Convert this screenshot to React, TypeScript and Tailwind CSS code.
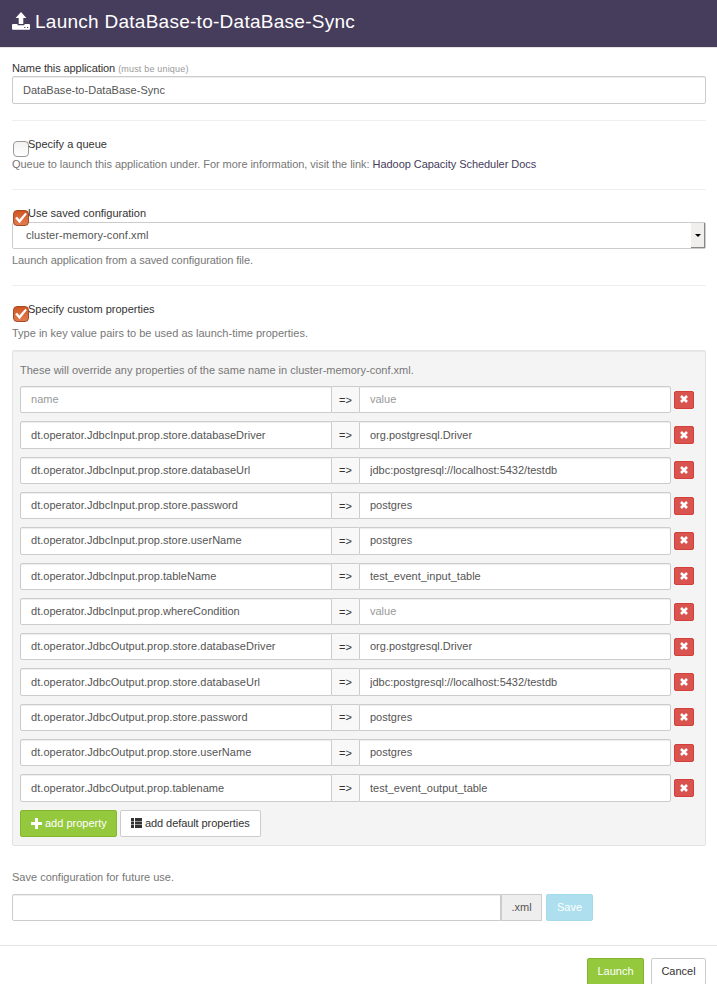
import React from "react";

const rows: [string, string][] = [
  ["", ""],
  ["dt.operator.JdbcInput.prop.store.databaseDriver", "org.postgresql.Driver"],
  ["dt.operator.JdbcInput.prop.store.databaseUrl", "jdbc:postgresql://localhost:5432/testdb"],
  ["dt.operator.JdbcInput.prop.store.password", "postgres"],
  ["dt.operator.JdbcInput.prop.store.userName", "postgres"],
  ["dt.operator.JdbcInput.prop.tableName", "test_event_input_table"],
  ["dt.operator.JdbcInput.prop.whereCondition", ""],
  ["dt.operator.JdbcOutput.prop.store.databaseDriver", "org.postgresql.Driver"],
  ["dt.operator.JdbcOutput.prop.store.databaseUrl", "jdbc:postgresql://localhost:5432/testdb"],
  ["dt.operator.JdbcOutput.prop.store.password", "postgres"],
  ["dt.operator.JdbcOutput.prop.store.userName", "postgres"],
  ["dt.operator.JdbcOutput.prop.tablename", "test_event_output_table"],
];

const inputStyle =
  "border border-[#cccccc] bg-white text-[#555555] placeholder:text-[#999999] shadow-[inset_0_1px_1px_rgba(0,0,0,0.075)] outline-none px-[10px] min-w-0";

function UploadIcon() {
  return (
    <svg width="18" height="18" viewBox="0 0 18 18" fill="#fff" className="shrink-0">
      <path d="M9 0 L14.4 6 H11.3 V12 H6.7 V6 H3.6 Z" />
      <path
        fillRule="evenodd"
        d="M1 12 H5.5 V13.2 H12.5 V12 H17 Q18 12 18 13 V16.7 Q18 17.7 17 17.7 H1 Q0 17.7 0 16.7 V13 Q0 12 1 12 Z M12.2 15 V16 H13.4 V15 Z M15 15 V16 H16.2 V15 Z"
      />
    </svg>
  );
}

function Check({ on, label }: { on?: boolean; label: string }) {
  return (
    <label className="flex h-[16px] items-start pl-px text-[#333333]">
      <span
        className={
          "relative z-10 mt-[5px] flex h-4 w-4 shrink-0 items-center justify-center rounded-[4px] border " +
          (on
            ? "border-[#a34a26] bg-linear-to-b from-[#d2541f] to-[#e07c50]"
            : "border-[#9c9a98] bg-linear-to-b from-[#f2f2f2] to-white")
        }
      >
        {on && (
          <svg width="14" height="14" viewBox="0 0 14 14" fill="#fff" className="shrink-0">
            <path d="M1.2 7.2 L3 5.8 L5.4 8.6 L11.3 1.8 L12.9 3 L5.6 12.2 Z" />
          </svg>
        )}
      </span>
      <span className="relative z-10 -ml-px leading-4">{label}</span>
    </label>
  );
}

export default function App() {
  return (
    <div className="h-[984px] w-[717px] overflow-hidden bg-white font-['Liberation_Sans',Arial,sans-serif] text-[11px] leading-4 text-[#777777]">
      <header className="flex h-[48px] items-start gap-[5px] border-b border-[#e5e5e5] bg-[#463c5c] pt-3 pl-3 text-white">
        <UploadIcon />
        <h1 className="text-[19px] leading-5 tracking-[0.265px]">Launch DataBase-to-DataBase-Sync</h1>
      </header>
      <main className="flex flex-col pr-[11px] pl-3">
        <label className="mt-[12px] h-4 text-[#333333]">
          <span className="tracking-[-0.1px]">Name this application</span>{" "}
          <small className="text-[9px] tracking-[0.18px] text-[#999999]">(must be unique)</small>
        </label>
        <input className={inputStyle + " h-7 rounded-[2px] tracking-[0.03px]"} defaultValue="DataBase-to-DataBase-Sync" />
        <hr className="mt-4 border-[#eeeeee]" />

        <div className="mt-[15px]">
          <Check label="Specify a queue" />
          <p className="mt-1 tracking-[-0.05px]">
            Queue to launch this application under. For more information, visit the link:{" "}
            <a className="text-[#463c5c]">Hadoop Capacity Scheduler Docs</a>
          </p>
        </div>
        <hr className="mt-[17px] border-[#eeeeee]" />

        <div className="mt-[15px]">
          <Check on label="Use saved configuration" />
          <div className="mt-[1px] flex h-[27px] items-stretch justify-between rounded-[2px] border border-[#cccccc] bg-white pl-[13px] text-[#555555]">
            <span className="leading-[25px] tracking-[0.09px]">cluster-memory-conf.xml</span>
            <span className="flex w-[14px] items-center justify-center border-r border-b border-[#888888] bg-[#f0efee]">
              <svg width="6" height="3" viewBox="0 0 6 3">
                <path d="M0 0H6L3 3Z" fill="#000" />
              </svg>
            </span>
          </div>
          <p className="mt-[3px] tracking-[-0.07px]">Launch application from a saved configuration file.</p>
        </div>
        <hr className="mt-[17px] border-[#eeeeee]" />

        <div className="mt-[15px]">
          <Check on label="Specify custom properties" />
          <p className="mt-2">Type in key value pairs to be used as launch-time properties.</p>
        </div>

        <section className="mt-[9px] h-[496px] rounded-[2px] border border-[#e3e3e3] bg-[#f4f4f4] px-[7px] pt-[11px] shadow-[inset_0_1px_1px_rgba(0,0,0,0.05)]">
          <p>These will override any properties of the same name in cluster-memory-conf.xml.</p>
          <div className="mt-[8.1px] flex flex-col gap-2">
            {rows.map(([name, value], i) => (
              <div key={i} className="flex h-[27.3px] items-center">
                <input
                  className={inputStyle + " h-full w-[312px] rounded-l-[2px] pb-[1px] " + (i > 6 ? "tracking-[0.05px]" : "tracking-[0.02px]")}
                  placeholder="name"
                  defaultValue={name}
                />
                <span className="flex h-full w-[27px] items-center justify-center border-y border-[#cccccc] bg-[#f8f8f8] text-[#333333]">
                  =&gt;
                </span>
                <input
                  className={inputStyle + " h-full w-[312px] rounded-r-[2px] pb-[1px]"}
                  placeholder="value"
                  defaultValue={value}
                />
                <button className="ml-[3px] flex h-[18px] w-5 items-center justify-center rounded-[2px] border border-[#d43f3a] bg-[#d9534f]">
                  <svg width="8" height="8" viewBox="0 0 8 8" className="mb-px">
                    <path d="M1 1L7 7M7 1L1 7" stroke="#fff" strokeWidth="2.6" />
                  </svg>
                </button>
              </div>
            ))}
          </div>
          <div className="mt-2 flex gap-[3px]">
            <button className="flex h-[27px] w-[97px] items-center rounded-[2px] border border-[#83b52f] bg-[#94c83d] pl-[10px] text-white">
              <svg width="11" height="11" viewBox="0 0 11 11" className="mr-[3px]">
                <path d="M4 0H7V4H11V7H7V11H4V7H0V4H4Z" fill="#fff" />
              </svg>
              add property
            </button>
            <button className="flex h-[27px] w-[141px] items-center rounded-[2px] border border-[#cccccc] bg-white pl-[10px] tracking-[-0.08px] text-[#333333]">
              <svg width="11" height="10" viewBox="0 0 11 10" className="mr-[3px]" fill="#333">
                <path d="M0 0H3V3H0ZM4 0H11V3H4ZM0 3.6H3V6.4H0ZM4 3.6H11V6.4H4ZM0 7H3V10H0ZM4 7H11V10H4Z" />
              </svg>
              add default properties
            </button>
          </div>
        </section>

        <p className="mt-[23px]">Save configuration for future use.</p>
        <div className="mt-[9px] flex h-[27px]">
          <input className={inputStyle + " w-[489px] rounded-l-[2px]"} />
          <span className="flex w-[41px] items-center justify-center border border-[#cccccc] bg-[#eeeeee] pb-[2px] text-[#555555]">
            .xml
          </span>
          <button className="ml-1 w-[47px] rounded-[2px] border border-[#a3dbeb] bg-[#addfee] pb-[2px] text-white">Save</button>
        </div>
      </main>
      <footer className="mt-6 flex justify-end gap-[7px] border-t border-[#e5e5e5] pt-3 pr-[11px]">
        <button className="h-[27px] w-[57px] rounded-[2px] border border-[#83b52f] bg-[#94c83d] pb-[2px] text-white">Launch</button>
        <button className="h-[27px] w-[55px] rounded-[2px] border border-[#cccccc] bg-white pb-[2px] text-[#333333]">Cancel</button>
      </footer>
    </div>
  );
}
